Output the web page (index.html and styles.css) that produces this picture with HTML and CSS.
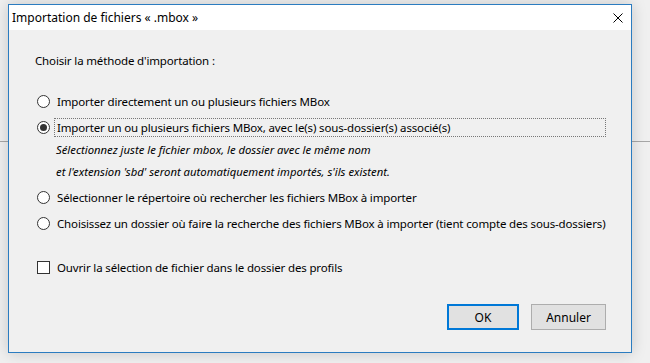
FILE: index.html
```html
<!DOCTYPE html>
<html lang="fr">
<head>
    <meta charset="UTF-8">
    <title>Importation de fichiers « .mbox »</title>
    <link rel="stylesheet" href="styles.css">
</head>
<body>
    <div class="dialog">
        <div class="titlebar">
            <span class="title">Importation de fichiers « .mbox »</span>
            <svg class="close" width="10" height="10" viewBox="0 0 10 10">
                <path d="M0.5 0.5 L9.5 9.5 M9.5 0.5 L0.5 9.5" stroke="#000" stroke-width="1"/>
            </svg>
        </div>
        <div class="content">
            <div class="heading">Choisir la méthode d'importation :</div>

            <div class="option">
                <span class="radio"></span>
                <span class="label">Importer directement un ou plusieurs fichiers MBox</span>
            </div>
            <div class="option">
                <span class="radio checked"></span>
                <span class="label focused">Importer un ou plusieurs fichiers MBox, avec le(s) sous-dossier(s) associé(s)</span>
            </div>
            <div class="note">
                <div>Sélectionnez juste le fichier mbox, le dossier avec le même nom</div>
                <div>et l'extension 'sbd' seront automatiquement importés, s'ils existent.</div>
            </div>
            <div class="option">
                <span class="radio"></span>
                <span class="label">Sélectionner le répertoire où rechercher les fichiers MBox à importer</span>
            </div>
            <div class="option">
                <span class="radio"></span>
                <span class="label">Choisissez un dossier où faire la recherche des fichiers MBox à importer (tient compte des sous-dossiers)</span>
            </div>

            <div class="option check-row">
                <span class="checkbox"></span>
                <span class="label">Ouvrir la sélection de fichier dans le dossier des profils</span>
            </div>

            <div class="buttons">
                <button class="btn btn-default">OK</button>
                <button class="btn">Annuler</button>
            </div>
        </div>
    </div>
</body>
</html>
```

FILE: styles.css
```css
body {
    margin: 0;
    width: 650px;
    height: 363px;
    overflow: hidden;
    background: linear-gradient(to bottom, transparent 141px, #a7a7a7 141px, #a7a7a7 142px, transparent 142px), #f0f0f0;
    font-family: "Noto Sans", "Open Sans", sans-serif;
    font-size: 11.5px;
    letter-spacing: -0.15px;
    color: #000;
}

.dialog {
    margin: 4px 0 0 8px;
    width: 622px;
    height: 347px;
    border: 1px solid #2b7cc0;
    background-color: #f0f0f0;
    box-shadow: 0 0 14px rgba(0, 0, 0, 0.18);
    display: flex;
    flex-direction: column;
}

.titlebar {
    height: 25px;
    background-color: #fff;
    display: flex;
    align-items: center;
    justify-content: space-between;
    padding: 0 8px 0 3px;
}

.title {
    font-size: 12px;
    letter-spacing: 0;
    line-height: 16px;
}

.content {
    flex: 1;
    padding: 0 25px 0 26px;
    display: flex;
    flex-direction: column;
}

.heading {
    margin-top: 23px;
    line-height: 16px;
}

.option {
    display: flex;
    align-items: center;
    height: 20px;
    margin-top: 6px;
    padding-left: 2px;
}

.content .heading + .option {
    margin-top: 22px;
}

.radio {
    width: 11px;
    height: 11px;
    border: 1px solid #333;
    border-radius: 50%;
    background-color: #fff;
    margin-right: 4px;
    flex: none;
    position: relative;
}

.radio.checked::after {
    content: "";
    position: absolute;
    left: 2px;
    top: 2px;
    width: 7px;
    height: 7px;
    border-radius: 50%;
    background-color: #333;
}

.checkbox {
    width: 11px;
    height: 11px;
    border: 1px solid #333;
    background-color: #fff;
    margin-right: 4px;
    flex: none;
}

.label {
    flex: 1;
    border: 1px dotted transparent;
    padding: 0 2px;
    line-height: 17px;
    white-space: nowrap;
}

.label.focused {
    border-color: #777;
}

.note {
    padding-left: 21px;
    font-style: italic;
    font-size: 11.3px;
    letter-spacing: 0;
    line-height: 22px;
    margin-top: 2px;
}

.note + .option {
    margin-top: 4px;
}

.content .check-row {
    margin-top: 24px;
}

.buttons {
    margin-top: 27px;
    display: flex;
    justify-content: flex-end;
    gap: 12px;
}

.btn {
    height: 26px;
    width: 75px;
    background-color: #e1e1e1;
    border: 1px solid #adadad;
    font-family: inherit;
    font-size: 12px;
    color: #000;
    padding: 0;
}

.btn-default {
    width: 72px;
    border: 2px solid #0078d7;
}
```
